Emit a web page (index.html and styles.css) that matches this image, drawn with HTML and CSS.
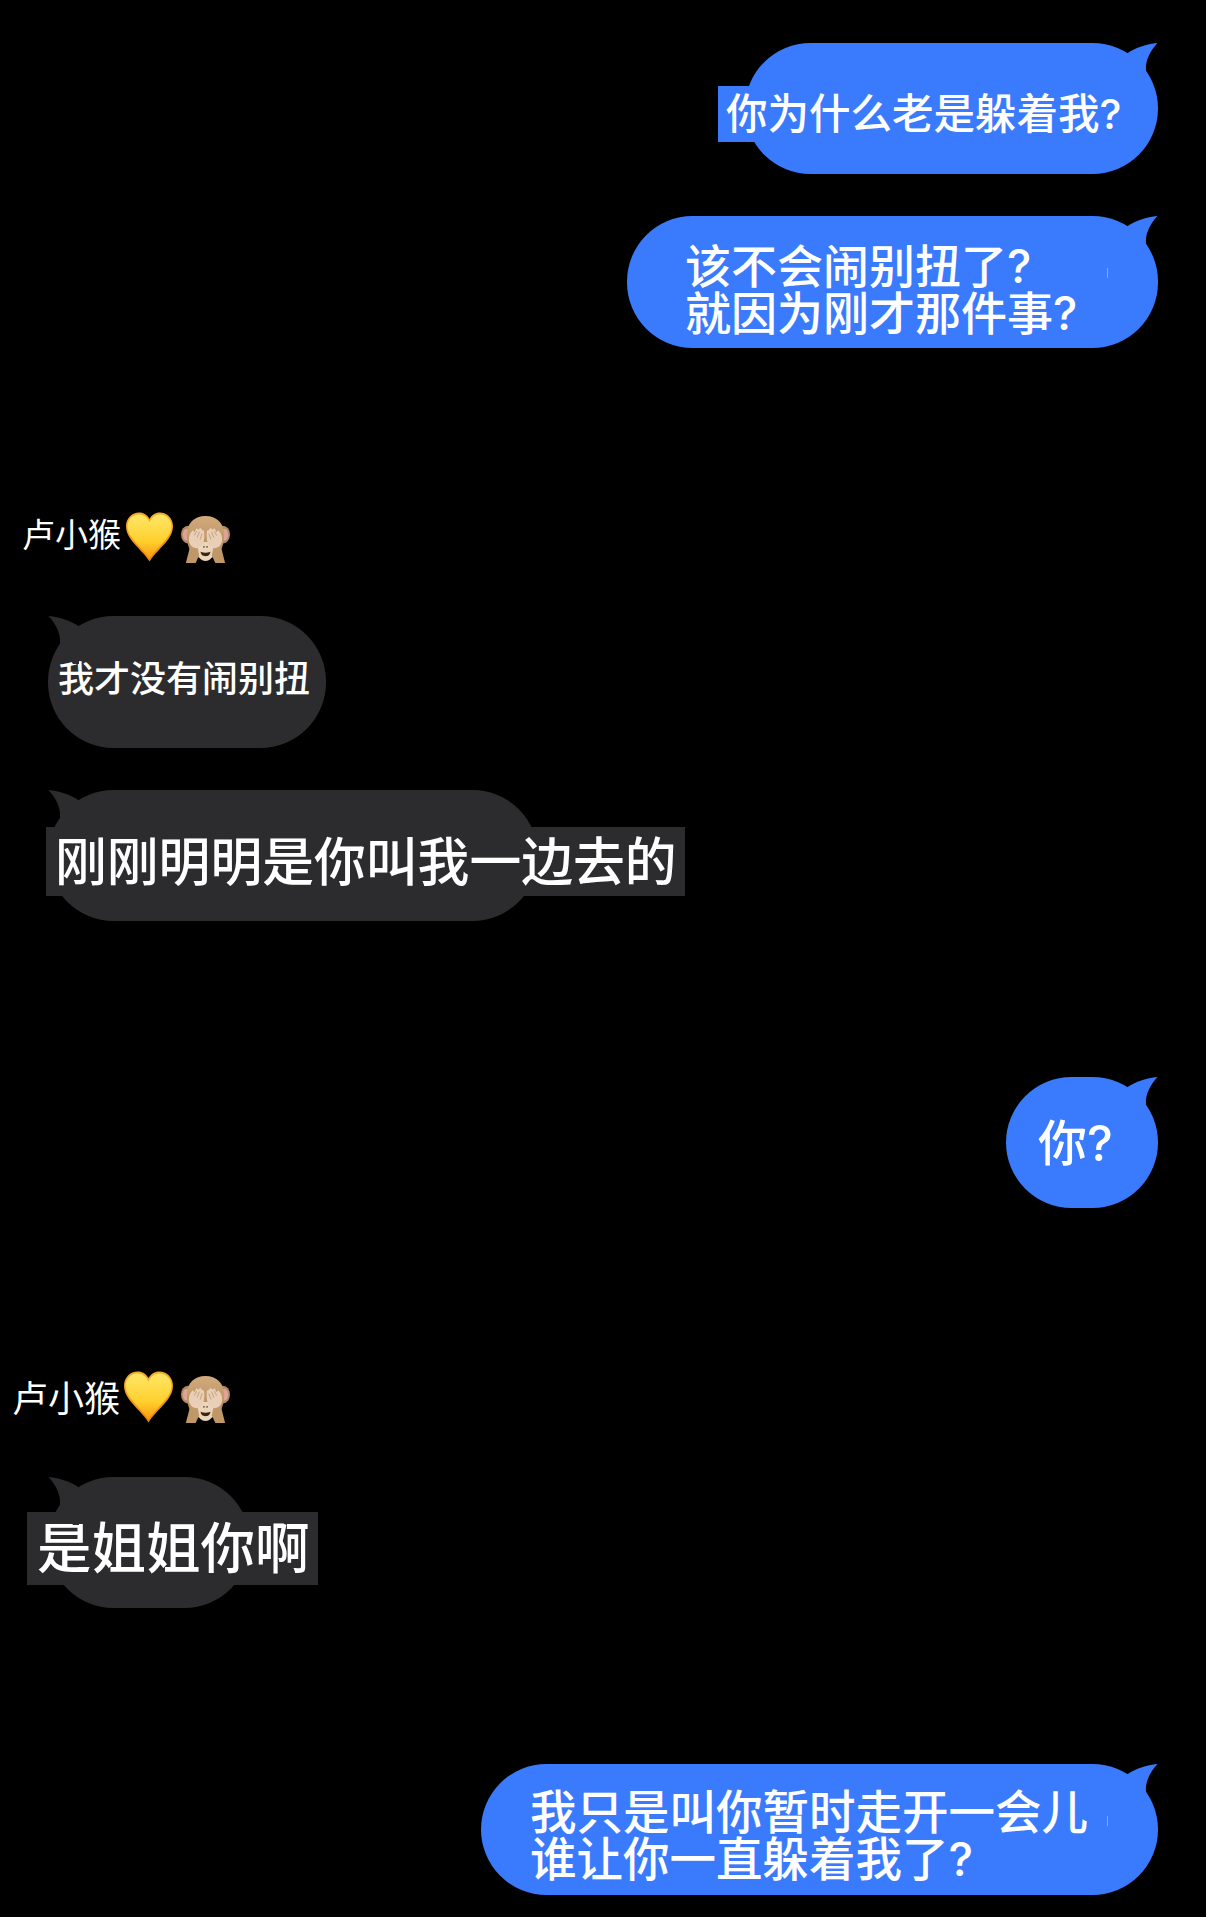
FILE: index.html
```html
<!DOCTYPE html>
<html lang="zh-CN">
<head>
<meta charset="utf-8">
<title>聊天</title>
<link rel="stylesheet" href="styles.css">
</head>
<body>
<svg class="defs" width="0" height="0" aria-hidden="true">
  <defs>
    <linearGradient id="heartFill" x1="0" y1="0" x2="0" y2="1">
      <stop offset="0" stop-color="#ffe768"/>
      <stop offset="0.6" stop-color="#ffd02e"/>
      <stop offset="1" stop-color="#fb9a10"/>
    </linearGradient>
    <linearGradient id="heartRim" x1="0" y1="0" x2="0" y2="1">
      <stop offset="0" stop-color="#f4ae2a"/>
      <stop offset="1" stop-color="#ef8208"/>
    </linearGradient>
    <linearGradient id="fur" x1="0" y1="0" x2="0" y2="1">
      <stop offset="0" stop-color="#d2aa7c"/>
      <stop offset="1" stop-color="#b08a5c"/>
    </linearGradient>
    <symbol id="heart" viewBox="0 0 48 50">
      <path fill="url(#heartRim)" d="M24 50C20 43 11 35.500 5 27.500C1.500 22.500 0 18.500 0 14C0 6 6 0 13.500 0C18 0 22 2.500 24 6.500C26 2.500 30 0 34.500 0C42 0 48 6 48 14C48 18.500 46.500 22.500 43 27.500C37 35.500 28 43 24 50Z"/>
      <path fill="url(#heartFill)" d="M24 47C20 41 12.500 34 6.500 26.500C3 22 1.500 18 1.500 14C1.500 7.500 6.500 2 13.500 2C18 2 22 5 24 10C26 5 30 2 34.500 2C41.500 2 46.500 7.500 46.500 14C46.500 18 45 22 41.500 26.500C35.500 34 28 41 24 47Z"/>
    </symbol>
    <symbol id="monkey" viewBox="0 0 50 48">
      <ellipse cx="7" cy="19" rx="7" ry="9" fill="#b08c60"/>
      <ellipse cx="43" cy="19" rx="7" ry="9" fill="#b08c60"/>
      <ellipse cx="5.500" cy="19" rx="3.500" ry="6" fill="#e0a39a"/>
      <ellipse cx="44.500" cy="19" rx="3.500" ry="6" fill="#e0a39a"/>
      <path fill="url(#fur)" d="M25 0C36 0 43.500 7 44 18C44.500 26 42 36 36 42L14 42C8 36 5.500 26 6 18C6.500 7 14 0 25 0Z"/>
      <path fill="#ecd6bb" d="M16 28C20 26 30 26 34 28C36.500 35 33 45 25 46C17 45 13.500 35 16 28Z"/>
      <path fill="#c09767" d="M5 48L9.500 30L17 32L18.500 40L15 48Z"/>
      <path fill="#c09767" d="M45 48L40.500 30L33 32L31.500 40L35 48Z"/>
      <path fill="#e8cfb6" d="M8 24C8 20 9.500 17 12 14.500L14 16.500L15.500 12.500L18 14L19.500 12L22 14.500L23.500 15C24 20 24 24 22.500 28C20.500 33 15 34 11.500 31.500C9.500 30 8 27 8 24Z"/>
      <path fill="#e8cfb6" d="M42 24C42 20 40.500 17 38 14.500L36 16.500L34.500 12.500L32 14L30.500 12L28 14.500L26.500 15C26 20 26 24 27.500 28C29.500 33 35 34 38.500 31.500C40.500 30 42 27 42 24Z"/>
      <path fill="none" stroke="#bb9370" stroke-width="0.800" d="M13.500 20L16 15.500M16.500 22L18.800 16M19.500 24L21.500 18M36.500 20L34 15.500M33.500 22L31.200 16M30.500 24L28.500 18"/>
      <circle cx="23.400" cy="31.500" r="0.900" fill="#6b4a2c"/>
      <circle cx="26.600" cy="31.500" r="0.900" fill="#6b4a2c"/>
      <path fill="#3a2415" d="M20 36.500C23 38 27 38 30 36.500C29.500 40 27.500 41 25 41C22.500 41 20.500 40 20 36.500Z"/>
    </symbol>
    <symbol id="tail" viewBox="0 0 31 48">
      <path d="M0 10.500C9 4.500 19 1 30.500 0C24 7 18 17 19 27.500L6 48L0 48Z"/>
    </symbol>
  </defs>
</svg>

<main class="chat">
  <div class="bubble me b-why">
    <span class="text hl-me t-why">你为什么老是躲着我?</span>
    <svg class="tail tail-right"><use href="#tail"/></svg>
  </div>

  <div class="bubble me b-sulk tick">
    <span class="text t-two t-sulk">该不会闹别扭了?<br>就因为刚才那件事?</span>
    <svg class="tail tail-right"><use href="#tail"/></svg>
  </div>

  <div class="sender sender-a">
    <span class="name name-a">卢小猴</span>
    <svg class="heart heart-a"><use href="#heart"/></svg>
    <svg class="monkey"><use href="#monkey"/></svg>
  </div>

  <div class="bubble them b-not">
    <span class="text t-not">我才没有闹别扭</span>
    <svg class="tail tail-left"><use href="#tail"/></svg>
  </div>

  <div class="bubble them b-just">
    <span class="text hl-them t-just">刚刚明明是你叫我一边去的</span>
    <svg class="tail tail-left"><use href="#tail"/></svg>
  </div>

  <div class="bubble me b-you">
    <span class="text t-you">你?</span>
    <svg class="tail tail-right"><use href="#tail"/></svg>
  </div>

  <div class="sender sender-b">
    <span class="name name-b">卢小猴</span>
    <svg class="heart heart-b"><use href="#heart"/></svg>
    <svg class="monkey"><use href="#monkey"/></svg>
  </div>

  <div class="bubble them b-sis">
    <span class="text hl-them t-sis">是姐姐你啊</span>
    <svg class="tail tail-left"><use href="#tail"/></svg>
  </div>

  <div class="bubble me b-only tick">
    <span class="text t-two t-only">我只是叫你暂时走开一会儿<br>谁让你一直躲着我了?</span>
    <svg class="tail tail-right"><use href="#tail"/></svg>
  </div>
</main>
</body>
</html>
```
FILE: styles.css
```css
* { box-sizing: border-box; }

html, body {
  margin: 0;
  background: #000;
}

body {
  width: 1206px;
  height: 1917px;
  overflow: hidden;
  font-family: Inter, "Noto Sans CJK SC", sans-serif;
  color: #fff;
}

.defs { position: absolute; }

.chat {
  display: flex;
  flex-direction: column;
  padding-top: 43px;
}

/* Bubbles */
.bubble {
  position: relative;
  display: flex;
  align-items: center;
  flex: none;
  height: 131px;
  border-radius: 65.500px;
}

.me {
  align-self: flex-end;
  margin-right: 48px;
  background: #3a7bfd;
}

.them {
  align-self: flex-start;
  background: #2c2c2f;
}

.tail {
  position: absolute;
  top: 0;
  width: 31px;
  height: 48px;
}

.tail-right { right: 0; fill: #3a7bfd; }
.tail-left { left: 0; fill: #2c2c2f; transform: scaleX(-1); }

.tick::after {
  content: "";
  position: absolute;
  right: 50px;
  top: 52px;
  width: 1px;
  height: 10px;
  background: #7ea9fb;
}

/* Text */
.text {
  white-space: nowrap;
  font-weight: 500;
}

.hl-me { background: #3a7bfd; }
.hl-them { background: #2c2c2f; }

.t-two {
  font-size: 46.500px;
  line-height: 47px;
}

.b-why { width: 413px; margin-bottom: 42px; }
.t-why {
  margin: 10px 0 0 -27px;
  padding: 3.500px 8px 1.500px;
  font-size: 41.500px;
  line-height: 51px;
}

.b-sulk { width: 531px; height: 132px; padding: 16px 0 0 58px; }
.t-sulk { font-size: 46px; }

.sender {
  display: flex;
  align-items: center;
  height: 52px;
  flex: none;
}

.sender-a { margin-top: 163px; padding-left: 22px; }
.sender-b { margin-top: 163px; padding-left: 12px; }

.name { font-weight: 400; }
.name-a { font-size: 33px; margin-top: -8px; }
.name-b { font-size: 36px; margin-top: -2px; }

.heart { flex: none; height: 52px; }
.heart-a { width: 47px; margin: 0 8px 0 5px; }
.heart-b { width: 49px; margin: 0 8px 0 4px; }

.monkey {
  flex: none;
  width: 49px;
  height: 49px;
  margin-top: 4px;
}

.b-not { width: 278px; height: 132px; margin: 53px 0 0 48px; padding: 0 0 0 10px; }
.t-not { font-size: 36px; line-height: 50px; margin-top: -6px; }

.b-just { width: 490px; margin: 42px 0 0 48px; }
.t-just {
  margin: 12px 0 0 -2px;
  padding: 3px 8px 1px 9px;
  font-size: 51.800px;
  line-height: 65px;
}

.b-you { width: 152px; margin-top: 156px; padding-left: 32px; }
.t-you { font-size: 49px; line-height: 60px; margin-top: 2px; }

.b-sis { width: 202px; margin: 54px 0 0 48px; }
.t-sis {
  margin: 12px 0 0 -21px;
  padding: 2px 8px 2px 10px;
  font-size: 54.500px;
  line-height: 69px;
}

.b-only { width: 677px; margin-top: 156px; padding: 13px 0 0 49px; }
```
